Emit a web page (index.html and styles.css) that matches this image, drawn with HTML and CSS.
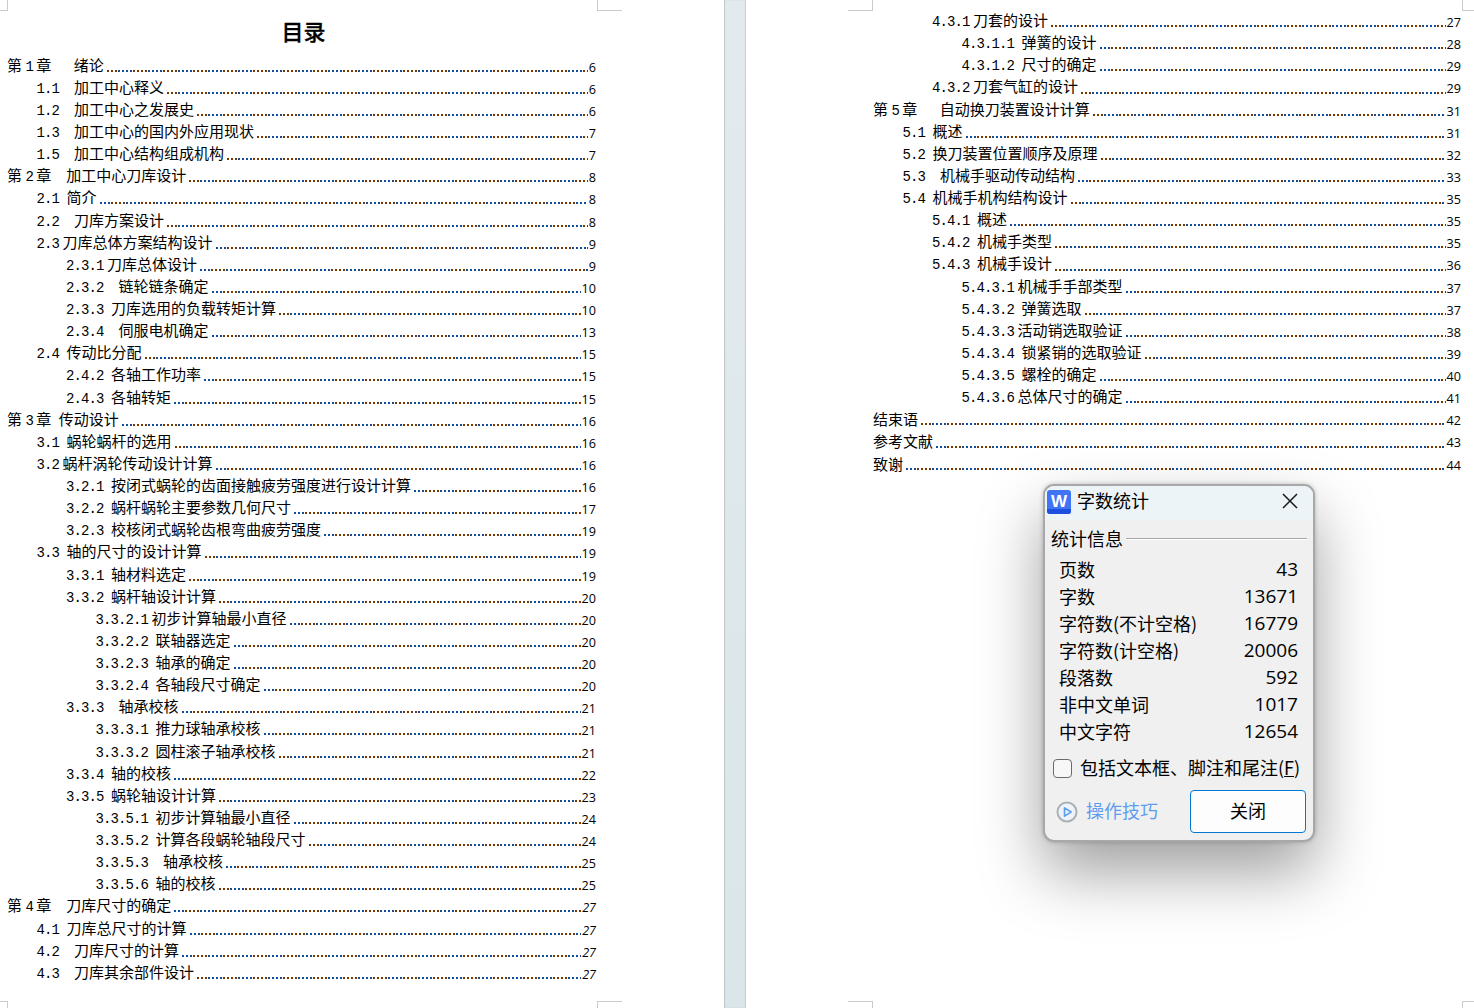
FILE: index.html
```html
<!DOCTYPE html>
<html lang="zh-CN">
<head>
<meta charset="utf-8">
<title>字数统计</title>
<link rel="stylesheet" href="styles.css">
</head>
<body>
<main class="doc">
<section class="page page-left">
<i class="mark tl-a"></i><i class="mark tr-a"></i><i class="mark bl-a"></i><i class="mark br-a"></i>
<h1 class="title">目录</h1>
<div class="row"><span>第<span class="n c">1</span>章<span class="n">   </span>绪论</span><i class="dots"></i><b class="pg">6</b></div>
<div class="row l1"><span><span class="n">1.1  </span>加工中心释义</span><i class="dots"></i><b class="pg">6</b></div>
<div class="row l1"><span><span class="n">1.2  </span>加工中心之发展史</span><i class="dots"></i><b class="pg">6</b></div>
<div class="row l1"><span><span class="n">1.3  </span>加工中心的国内外应用现状</span><i class="dots"></i><b class="pg">7</b></div>
<div class="row l1"><span><span class="n">1.5  </span>加工中心结构组成机构</span><i class="dots"></i><b class="pg">7</b></div>
<div class="row"><span>第<span class="n c">2</span>章<span class="n">  </span>加工中心刀库设计</span><i class="dots"></i><b class="pg">8</b></div>
<div class="row l1"><span><span class="n">2.1 </span>简介</span><i class="dots"></i><b class="pg">8</b></div>
<div class="row l1"><span><span class="n">2.2  </span>刀库方案设计</span><i class="dots"></i><b class="pg">8</b></div>
<div class="row l1"><span><span class="n t">2.3</span>刀库总体方案结构设计</span><i class="dots"></i><b class="pg">9</b></div>
<div class="row l2"><span><span class="n t">2.3.1</span>刀库总体设计</span><i class="dots"></i><b class="pg">9</b></div>
<div class="row l2"><span><span class="n">2.3.2  </span>链轮链条确定</span><i class="dots"></i><b class="pg">10</b></div>
<div class="row l2"><span><span class="n">2.3.3 </span>刀库选用的负载转矩计算</span><i class="dots"></i><b class="pg">10</b></div>
<div class="row l2"><span><span class="n">2.3.4  </span>伺服电机确定</span><i class="dots"></i><b class="pg">13</b></div>
<div class="row l1"><span><span class="n">2.4 </span>传动比分配</span><i class="dots"></i><b class="pg">15</b></div>
<div class="row l2"><span><span class="n">2.4.2 </span>各轴工作功率</span><i class="dots"></i><b class="pg">15</b></div>
<div class="row l2"><span><span class="n">2.4.3 </span>各轴转矩</span><i class="dots"></i><b class="pg">15</b></div>
<div class="row"><span>第<span class="n c">3</span>章<span class="n"> </span>传动设计</span><i class="dots"></i><b class="pg">16</b></div>
<div class="row l1"><span><span class="n">3.1 </span>蜗轮蜗杆的选用</span><i class="dots"></i><b class="pg">16</b></div>
<div class="row l1"><span><span class="n t">3.2</span>蜗杆涡轮传动设计计算</span><i class="dots"></i><b class="pg">16</b></div>
<div class="row l2"><span><span class="n">3.2.1 </span>按闭式蜗轮的齿面接触疲劳强度进行设计计算</span><i class="dots"></i><b class="pg">16</b></div>
<div class="row l2"><span><span class="n">3.2.2 </span>蜗杆蜗轮主要参数几何尺寸</span><i class="dots"></i><b class="pg">17</b></div>
<div class="row l2"><span><span class="n">3.2.3 </span>校核闭式蜗轮齿根弯曲疲劳强度</span><i class="dots"></i><b class="pg">19</b></div>
<div class="row l1"><span><span class="n">3.3 </span>轴的尺寸的设计计算</span><i class="dots"></i><b class="pg">19</b></div>
<div class="row l2"><span><span class="n">3.3.1 </span>轴材料选定</span><i class="dots"></i><b class="pg">19</b></div>
<div class="row l2"><span><span class="n">3.3.2 </span>蜗杆轴设计计算</span><i class="dots"></i><b class="pg">20</b></div>
<div class="row l3"><span><span class="n t">3.3.2.1</span>初步计算轴最小直径</span><i class="dots"></i><b class="pg">20</b></div>
<div class="row l3"><span><span class="n">3.3.2.2 </span>联轴器选定</span><i class="dots"></i><b class="pg">20</b></div>
<div class="row l3"><span><span class="n">3.3.2.3 </span>轴承的确定</span><i class="dots"></i><b class="pg">20</b></div>
<div class="row l3"><span><span class="n">3.3.2.4 </span>各轴段尺寸确定</span><i class="dots"></i><b class="pg">20</b></div>
<div class="row l2"><span><span class="n">3.3.3  </span>轴承校核</span><i class="dots"></i><b class="pg">21</b></div>
<div class="row l3"><span><span class="n">3.3.3.1 </span>推力球轴承校核</span><i class="dots"></i><b class="pg">21</b></div>
<div class="row l3"><span><span class="n">3.3.3.2 </span>圆柱滚子轴承校核</span><i class="dots"></i><b class="pg">21</b></div>
<div class="row l2"><span><span class="n">3.3.4 </span>轴的校核</span><i class="dots"></i><b class="pg">22</b></div>
<div class="row l2"><span><span class="n">3.3.5 </span>蜗轮轴设计计算</span><i class="dots"></i><b class="pg">23</b></div>
<div class="row l3"><span><span class="n">3.3.5.1 </span>初步计算轴最小直径</span><i class="dots"></i><b class="pg">24</b></div>
<div class="row l3"><span><span class="n">3.3.5.2 </span>计算各段蜗轮轴段尺寸</span><i class="dots"></i><b class="pg">24</b></div>
<div class="row l3"><span><span class="n">3.3.5.3  </span>轴承校核</span><i class="dots"></i><b class="pg">25</b></div>
<div class="row l3"><span><span class="n">3.3.5.6 </span>轴的校核</span><i class="dots"></i><b class="pg">25</b></div>
<div class="row"><span>第<span class="n c">4</span>章<span class="n">  </span>刀库尺寸的确定</span><i class="dots"></i><b class="pg it">27</b></div>
<div class="row l1"><span><span class="n">4.1 </span>刀库总尺寸的计算</span><i class="dots"></i><b class="pg it">27</b></div>
<div class="row l1"><span><span class="n">4.2  </span>刀库尺寸的计算</span><i class="dots"></i><b class="pg it">27</b></div>
<div class="row l1"><span><span class="n">4.3  </span>刀库其余部件设计</span><i class="dots"></i><b class="pg it">27</b></div>
</section>
<div class="gutter"></div>
<section class="page page-right">
<i class="mark tl-b"></i><i class="mark tr-b"></i><i class="mark bl-b"></i><i class="mark br-b"></i>
<div class="row l2"><span><span class="n t">4.3.1</span>刀套的设计</span><i class="dots"></i><b class="pg">27</b></div>
<div class="row l3"><span><span class="n">4.3.1.1 </span>弹簧的设计</span><i class="dots"></i><b class="pg">28</b></div>
<div class="row l3"><span><span class="n">4.3.1.2 </span>尺寸的确定</span><i class="dots"></i><b class="pg">29</b></div>
<div class="row l2"><span><span class="n t">4.3.2</span>刀套气缸的设计</span><i class="dots"></i><b class="pg">29</b></div>
<div class="row"><span>第<span class="n c">5</span>章<span class="n">   </span>自动换刀装置设计计算</span><i class="dots"></i><b class="pg">31</b></div>
<div class="row l1"><span><span class="n">5.1 </span>概述</span><i class="dots"></i><b class="pg">31</b></div>
<div class="row l1"><span><span class="n">5.2 </span>换刀装置位置顺序及原理</span><i class="dots"></i><b class="pg">32</b></div>
<div class="row l1"><span><span class="n">5.3  </span>机械手驱动传动结构</span><i class="dots"></i><b class="pg">33</b></div>
<div class="row l1"><span><span class="n">5.4 </span>机械手机构结构设计</span><i class="dots"></i><b class="pg">35</b></div>
<div class="row l2"><span><span class="n">5.4.1 </span>概述</span><i class="dots"></i><b class="pg">35</b></div>
<div class="row l2"><span><span class="n">5.4.2 </span>机械手类型</span><i class="dots"></i><b class="pg">35</b></div>
<div class="row l2"><span><span class="n">5.4.3 </span>机械手设计</span><i class="dots"></i><b class="pg">36</b></div>
<div class="row l3"><span><span class="n t">5.4.3.1</span>机械手手部类型</span><i class="dots"></i><b class="pg">37</b></div>
<div class="row l3"><span><span class="n">5.4.3.2 </span>弹簧选取</span><i class="dots"></i><b class="pg">37</b></div>
<div class="row l3"><span><span class="n t">5.4.3.3</span>活动销选取验证</span><i class="dots"></i><b class="pg">38</b></div>
<div class="row l3"><span><span class="n">5.4.3.4 </span>锁紧销的选取验证</span><i class="dots"></i><b class="pg">39</b></div>
<div class="row l3"><span><span class="n">5.4.3.5 </span>螺栓的确定</span><i class="dots"></i><b class="pg">40</b></div>
<div class="row l3"><span><span class="n t">5.4.3.6</span>总体尺寸的确定</span><i class="dots"></i><b class="pg">41</b></div>
<div class="row"><span>结束语</span><i class="dots"></i><b class="pg">42</b></div>
<div class="row"><span>参考文献</span><i class="dots"></i><b class="pg">43</b></div>
<div class="row"><span>致谢</span><i class="dots"></i><b class="pg">44</b></div>
</section>
</main>
<aside class="dialog">
<header class="dlg-head">
<svg class="logo" width="24" height="24" viewBox="0 0 24 24" aria-hidden="true"><rect width="24" height="24" rx="3" fill="#3f74f6"/><path d="M0 19h24v2a3 3 0 0 1-3 3H3a3 3 0 0 1-3-3z" fill="#1c4fe0"/><text x="12" y="16.5" text-anchor="middle" class="logo-w">W</text></svg>
<span class="dlg-title">字数统计</span>
<svg class="close" width="16" height="16" viewBox="0 0 16 16" aria-hidden="true"><path d="M1 1l14 14M15 1L1 15" stroke="#1a1a1a" stroke-width="1.5" fill="none"/></svg>
</header>
<div class="dlg-body">
<div class="legend"><span>统计信息</span><i class="groove"></i></div>
<ul class="stats">
<li><span>页数</span><span class="val">43</span></li>
<li><span>字数</span><span class="val">13671</span></li>
<li><span>字符数(不计空格)</span><span class="val">16779</span></li>
<li><span>字符数(计空格)</span><span class="val">20006</span></li>
<li><span>段落数</span><span class="val">592</span></li>
<li><span>非中文单词</span><span class="val">1017</span></li>
<li><span>中文字符</span><span class="val">12654</span></li>
</ul>
<div class="check"><i class="box"></i><span>包括文本框、脚注和尾注(<u>F</u>)</span></div>
<div class="foot">
<svg class="play" width="22" height="22" viewBox="0 0 22 22" aria-hidden="true"><circle cx="11" cy="11" r="9.5" fill="#eef3f8" stroke="#a9b0b6" stroke-width="2"/><path d="M8.5 6.8l6.6 4.2-6.6 4.2z" fill="none" stroke="#5d9df0" stroke-width="1.6" stroke-linejoin="round"/></svg>
<span class="tips">操作技巧</span>
<button class="btn" type="button">关闭</button>
</div>
</div>
</aside>
</body>
</html>
```

FILE: styles.css
```css
html, body {
  margin: 0;
  height: 1008px;
  overflow: hidden;
  background: #fff;
}
body {
  position: relative;
  font-family: "Noto Sans CJK SC", "Liberation Sans", sans-serif;
  color: #000;
}
.doc {
  display: flex;
  height: 1008px;
}
.page {
  position: relative;
  box-sizing: border-box;
  height: 1008px;
  background: #fff;
  font-size: 15px;
}
.page-left {
  width: 724px;
  padding: 0 128px 0 7px;
}
.page-right {
  width: 728px;
  padding: 10px 13px 0 127px;
}
.gutter {
  width: 22px;
  background: linear-gradient(180deg, #e3eaed 0%, #dae6e9 100%);
  box-shadow: inset 1px 0 1px #bfc6c8, inset -1px 0 1px #c6cdcf;
}
.title {
  margin: 0;
  height: 54.6px;
  box-sizing: border-box;
  padding: 14px 0 0 4px;
  text-align: center;
  font-size: 22px;
  line-height: 33px;
  font-weight: 500;
  -webkit-text-stroke: .3px #000;
}
.row {
  display: flex;
  align-items: center;
  height: 22.14px;
  line-height: 22px;
  white-space: nowrap;
}
.l1 { padding-left: 29.5px; }
.l2 { padding-left: 59px; }
.l3 { padding-left: 88.5px; }
.n {
  font-family: "Liberation Mono", monospace;
  font-size: 14px;
  letter-spacing: -.9px;
  white-space: pre;
}
.t { margin-right: 3.5px; }
.c { padding: 0 3.4px; }
.dots {
  flex: 1;
  align-self: flex-end;
  height: 2px;
  margin: 0 1px 5px 3px;
  background-image: linear-gradient(90deg,
    #0f4a96 0, #0f4a96 1px, #7d3a00 1px, #7d3a00 2px, transparent 2px, transparent 4px,
    #0f4a96 4px, #0f4a96 5px, #7d3a00 5px, #7d3a00 6px, transparent 6px, transparent 8px,
    #0f4a96 8px, #0f4a96 9px, #7d3a00 9px, #7d3a00 10px, transparent 10px, transparent 11px,
    #0f4a96 11px, #0f4a96 12px, #7d3a00 12px, #7d3a00 13px, transparent 13px, transparent 15px);
  background-size: 15px 2px;
}
.pg {
  margin-top: 4px;
  font-family: "Open Sans", sans-serif;
  font-weight: 400;
  font-size: 12.6px;
}
.it { font-style: italic; }
.mark {
  position: absolute;
  display: block;
  box-sizing: border-box;
  border: 0 solid #cbcbcb;
}
.tl-a, .bl-a { left: 0; width: 8px; }
.tr-a, .br-a { left: 597px; width: 25px; }
.tl-b, .bl-b { left: 102px; width: 25px; }
.tr-b, .br-b { left: 716px; width: 12px; }
.tl-a, .tr-a, .tl-b, .tr-b { top: 0; height: 11px; border-bottom-width: 1px; }
.bl-a, .br-a, .bl-b, .br-b { top: 1001px; height: 7px; border-top-width: 1px; }
.tl-a, .bl-a, .tl-b, .bl-b { border-right-width: 1px; }
.tr-a, .br-a, .tr-b, .br-b { border-left-width: 1px; }
.dialog {
  position: absolute;
  left: 1043px;
  top: 484px;
  box-sizing: border-box;
  width: 272px;
  height: 358px;
  border: 2px solid #a8a8a8;
  border-radius: 11px;
  background: #f0f0f0;
  font-size: 18px;
  line-height: 27px;
  box-shadow: 0 0 4px rgba(0, 0, 0, .22), 0 30px 64px rgba(0, 0, 0, .38);
}
.dlg-head {
  display: flex;
  align-items: center;
  height: 34px;
  padding: 0 15px 0 2px;
  background: #ecf4f7;
  border-radius: 9px 9px 0 0;
}
.logo { flex: none; margin-top: -3px; }
.logo-w {
  font-family: "Liberation Sans", sans-serif;
  font-weight: 700;
  font-size: 17px;
  fill: #fff;
}
.dlg-title { margin: -6px 0 0 6px; flex: 1; }
.close { flex: none; margin-top: -4px; }
.dlg-body { padding: 5px 6px 0 6px; }
.legend {
  display: flex;
  align-items: center;
  height: 27px;
}
.groove {
  flex: 1;
  height: 1px;
  margin: 0 0 0 3px;
  background: #a8a8a8;
  box-shadow: 0 1px 0 #fff;
}
.stats {
  list-style: none;
  margin: 4px 0 0;
  padding: 0 9px 0 8px;
}
.stats li {
  display: flex;
  justify-content: space-between;
  height: 27px;
}
.val {
  font-family: "Open Sans", sans-serif;
  font-size: 19px;
}
.check {
  display: flex;
  align-items: center;
  margin: 10px 0 0 2px;
  height: 27px;
  white-space: nowrap;
}
.check span { margin-top: -2px; }
.box {
  flex: none;
  width: 19px;
  height: 19px;
  box-sizing: border-box;
  border: 1px solid #6a6a6a;
  border-radius: 4px;
  background: #f7f7f7;
  margin-right: 8px;
}
.foot {
  display: flex;
  align-items: center;
  margin-top: 8px;
  height: 43px;
}
.play { flex: none; margin-left: 5px; }
.tips {
  margin: -2px 0 0 8px;
  color: #5d9df0;
  flex: 1;
}
.btn {
  width: 116px;
  height: 43px;
  margin-right: 1px;
  padding: 0 0 2px;
  border: 1px solid #0078d4;
  border-radius: 4px;
  background: #fdfdfd;
  font: inherit;
  color: #000;
}
```
